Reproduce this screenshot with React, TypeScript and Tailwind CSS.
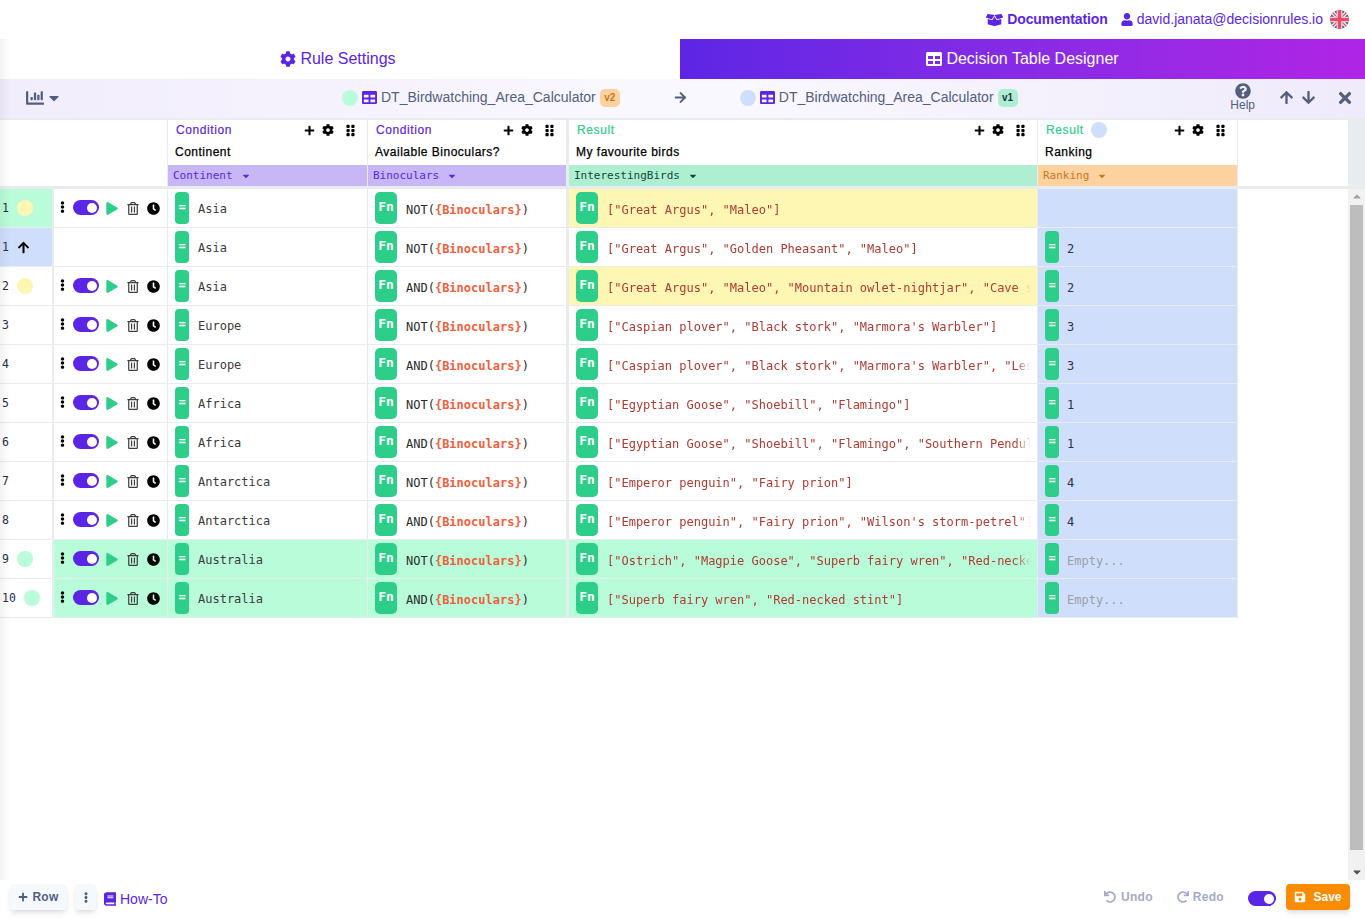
import React from 'react';
import {
  FaArrowDown,
  FaArrowRight,
  FaArrowUp,
  FaBook,
  FaBoxOpen,
  FaCaretDown,
  FaChartBar,
  FaClock,
  FaCog,
  FaEllipsisV,
  FaGripVertical,
  FaPlay,
  FaPlus,
  FaQuestionCircle,
  FaRedo,
  FaRegTrashAlt,
  FaSave,
  FaTable,
  FaTimes,
  FaUndo,
  FaUser,
} from 'react-icons/fa';

const MONO = { fontFamily: '"DejaVu Sans Mono", monospace' };

interface Row {
  n: string;
  continent: string;
  fn: 'NOT' | 'AND';
  birds: string;
  rank: string;
  kind?: 'old' | 'moved' | 'changed' | 'added';
}

const rows: Row[] = [
  { n: '1', continent: 'Asia', fn: 'NOT', birds: '["Great Argus", "Maleo"]', rank: '', kind: 'old' },
  { n: '1', continent: 'Asia', fn: 'NOT', birds: '["Great Argus", "Golden Pheasant", "Maleo"]', rank: '2', kind: 'moved' },
  { n: '2', continent: 'Asia', fn: 'AND', birds: '["Great Argus", "Maleo", "Mountain owlet-nightjar", "Cave swiftlet"]', rank: '2', kind: 'changed' },
  { n: '3', continent: 'Europe', fn: 'NOT', birds: '["Caspian plover", "Black stork", "Marmora\'s Warbler"]', rank: '3' },
  { n: '4', continent: 'Europe', fn: 'AND', birds: '["Caspian plover", "Black stork", "Marmora\'s Warbler", "Lesser kestrel"]', rank: '3' },
  { n: '5', continent: 'Africa', fn: 'NOT', birds: '["Egyptian Goose", "Shoebill", "Flamingo"]', rank: '1' },
  { n: '6', continent: 'Africa', fn: 'AND', birds: '["Egyptian Goose", "Shoebill", "Flamingo", "Southern Pendulin"]', rank: '1' },
  { n: '7', continent: 'Antarctica', fn: 'NOT', birds: '["Emperor penguin", "Fairy prion"]', rank: '4' },
  { n: '8', continent: 'Antarctica', fn: 'AND', birds: '["Emperor penguin", "Fairy prion", "Wilson\'s storm-petrel"]', rank: '4' },
  { n: '9', continent: 'Australia', fn: 'NOT', birds: '["Ostrich", "Magpie Goose", "Superb fairy wren", "Red-necked stint"]', rank: '', kind: 'added' },
  { n: '10', continent: 'Australia', fn: 'AND', birds: '["Superb fairy wren", "Red-necked stint"]', rank: '', kind: 'added' },
];

const Dot = ({ className }: { className: string }) => (
  <span className={`block w-4 h-4 rounded-full shrink-0 ${className}`} />
);

const Toggle = ({ className = 'w-[26px] h-[15px]' }: { className?: string }) => (
  <span className={`flex items-center justify-end pr-[2px] rounded-full bg-[#5b25e5] shrink-0 ${className}`}>
    <span className="block w-[10px] h-[10px] rounded-full bg-white" />
  </span>
);

const EqBadge = () => (
  <span className="flex items-center justify-center w-[14px] h-8 rounded-[4px] bg-[#2dce89] text-white text-[12px] font-bold shrink-0 pb-[2px]" style={MONO}>
    =
  </span>
);

const FnBadge = () => (
  <span
    className="flex items-start justify-center pt-[7px] w-[22px] h-8 rounded-[5px] bg-[#2dce89] text-white text-[13px] leading-[16px] font-bold shrink-0"
    style={MONO}
  >
    Fn
  </span>
);

const HeaderCell = ({
  label,
  title,
  column,
  tone,
  width,
  dot,
}: {
  label: string;
  title: string;
  column: string;
  tone: 'condition' | 'result' | 'ranking';
  width: string;
  dot?: boolean;
}) => {
  const strip =
    tone === 'condition'
      ? 'bg-[#c7b7f6] text-[#5b25e5]'
      : tone === 'result'
        ? 'bg-[#aeefd2] text-[#17463a]'
        : 'bg-[#fdd29f] text-[#c9761c]';
  return (
    <div className={`flex flex-col shrink-0 border-r border-[#e9ecef] ${width}`}>
      <div className="flex items-center h-[21px] pl-2 pr-[10px] pb-[1px]">
        <span
          className={`text-[12px] tracking-[0.6px] [-webkit-text-stroke:0.2px] ${tone === 'condition' ? 'text-[#5b25e5]' : 'text-[#2dce89]'}`}
        >
          {label}
        </span>
        {dot && <Dot className="bg-[#cfdffb] ml-[7px]" />}
        <span className="ml-auto flex items-center text-black">
          <FaPlus className="w-[11px] h-[11px]" />
          <FaCog className="w-[12px] h-[12px] ml-[7px]" />
          <FaGripVertical className="w-[13px] h-[13px] ml-[10px]" />
        </span>
      </div>
      <div className="h-[24px] pl-[7px] pb-[2px] flex items-center text-[12px] tracking-[0.5px] [-webkit-text-stroke:0.25px] text-black">{title}</div>
      <div className={`h-[21px] pl-[5px] pt-[1px] flex items-center text-[11px] ${strip}`} style={MONO}>
        {column}
        <FaCaretDown className="w-[10px] h-[10px] ml-[8px]" />
      </div>
    </div>
  );
};

const TableRow = ({ row }: { row: Row }) => {
  const { kind } = row;
  const added = kind === 'added';
  const indexBg = kind === 'old' ? 'bg-[#b9fcd9]' : kind === 'moved' ? 'bg-[#cfdffb]' : 'bg-white';
  const cellBg = added ? 'bg-[#b9fcd9]' : 'bg-white';
  const birdsBg = added ? 'bg-[#b9fcd9]' : kind === 'old' || kind === 'changed' ? 'bg-[#fef6b3]' : 'bg-white';
  return (
    <div className="flex h-[39px] w-[1238px] shrink-0 border-b border-[#e9ecef]">
      <div className={`flex items-center w-[52px] shrink-0 pl-[2px] text-[11.5px] text-[#24304a] ${indexBg}`} style={MONO}>
        <span className="w-[15px] pt-[1px]">{row.n}</span>
        {(kind === 'old' || kind === 'changed') && <Dot className="bg-[#fef6b3]" />}
        {added && <Dot className={`bg-[#b9fcd9] ${row.n === '10' ? 'ml-[7px]' : ''}`} />}
        {kind === 'moved' && <FaArrowUp className="w-[13px] h-[13px] text-black" />}
      </div>
      <div className={`flex items-center w-[116px] shrink-0 border-l-2 border-r border-[#e9ecef] pl-[3px] ${cellBg}`}>
        {kind !== 'moved' && (
          <>
            <FaEllipsisV className="w-[11px] h-[12px] text-black mb-[3px]" />
            <Toggle className="w-[26px] h-[15px] ml-[5px] mb-[1px]" />
            <FaPlay className="w-[12px] h-[13px] text-[#2dce89] ml-[7px]" />
            <FaRegTrashAlt className="w-[12px] h-[13px] text-[#3f3f3f] ml-[9px]" />
            <FaClock className="w-[13px] h-[13px] text-black ml-[8px]" />
          </>
        )}
      </div>
      <div className={`flex items-center gap-[9px] w-[200px] shrink-0 pl-[7px] border-r border-[#e9ecef] text-[12px] text-[#3a3a3a] ${cellBg}`} style={MONO}>
        <EqBadge />
        <span className="pt-[1px]">{row.continent}</span>
      </div>
      <div className={`flex items-center gap-[9px] w-[201px] shrink-0 pl-[7px] border-r-[3px] border-[#e9ecef] text-[12px] text-[#2b2b2b] ${cellBg}`} style={MONO}>
        <FnBadge />
        <span className="pt-[3px]">
          {row.fn}(<span className="text-[#f0603c] font-bold">{'{Binoculars}'}</span>)
        </span>
      </div>
      <div className={`flex items-center gap-[9px] w-[469px] shrink-0 pl-[7px] pr-[6px] border-r border-[#e9ecef] text-[12px] text-[#ae3b32] ${birdsBg}`} style={MONO}>
        <FnBadge />
        <span className="flex-1 min-w-0 pt-[3px] overflow-hidden whitespace-nowrap [mask-image:linear-gradient(to_right,black_calc(100%-16px),transparent)]">
          {row.birds}
        </span>
      </div>
      <div className="flex items-center gap-[8px] w-[200px] shrink-0 pl-[7px] border-r border-[#e9ecef] bg-[#cfdffb] text-[12px] text-[#2b3350]" style={MONO}>
        {kind !== 'old' && <EqBadge />}
        {kind !== 'old' && (
          <span className="pt-[3px]">{row.rank ? row.rank : <span className="text-[#9a9fa8]">Empty...</span>}</span>
        )}
      </div>
    </div>
  );
};

export default function App() {
  return (
    <div className="relative flex flex-col w-[1365px] h-[918px] overflow-hidden bg-white" style={{ fontFamily: '"Liberation Sans", Arial, sans-serif' }}>
      <div className="absolute left-0 top-[39px] bottom-[38px] w-[10px] bg-gradient-to-r from-black/5 to-transparent pointer-events-none z-10" />

      {/* top bar */}
      <div className="flex items-center justify-end h-[39px] pr-[16px] text-[14px] text-[#5b25e5] shrink-0">
        <FaBoxOpen className="w-[17px] h-[14px]" />
        <span className="ml-[4px] font-bold tracking-[-0.1px]">Documentation</span>
        <FaUser className="w-[12px] h-[13px] ml-[13px]" />
        <span className="ml-[4px]">david.janata@decisionrules.io</span>
        <svg viewBox="0 0 60 60" className="w-[19px] h-[19px] ml-[7px]">
          <clipPath id="flag">
            <circle cx="30" cy="30" r="30" />
          </clipPath>
          <g clipPath="url(#flag)">
            <rect width="60" height="60" fill="#44578f" />
            <path d="M0 0L60 60M60 0L0 60" stroke="#eeeef3" strokeWidth="12" />
            <path d="M0 0L60 60M60 0L0 60" stroke="#ef4a64" strokeWidth="4" />
            <path d="M30 0V60M0 30H60" stroke="#eeeef3" strokeWidth="18" />
            <path d="M30 0V60M0 30H60" stroke="#ef4a64" strokeWidth="11" />
          </g>
        </svg>
      </div>

      {/* tabs */}
      <div className="flex h-[40px] shrink-0 text-[16px]">
        <div className="flex items-center justify-center gap-[4px] w-[680px] pr-[4px] text-[#5b25e5]">
          <FaCog className="w-[16px] h-[16px]" />
          Rule Settings
        </div>
        <div className="flex items-center justify-center gap-[4px] flex-1 text-white bg-gradient-to-r from-[#5e25e5] to-[#b024e5]">
          <FaTable className="w-[16px] h-[16px]" />
          Decision Table Designer
        </div>
      </div>

      {/* compare toolbar */}
      <div className="flex items-center h-[39px] pb-[2px] shrink-0 bg-gradient-to-r from-[#f1edfc] via-[#faf8ff] to-[#efebfb] text-[#525f7f]">
        <div className="flex items-center w-[342px] pl-[26px]">
          <FaChartBar className="w-[18px] h-[18px]" />
          <FaCaretDown className="w-[16px] h-[16px] ml-[2px]" />
        </div>
        <Dot className="bg-[#b9fcd9]" />
        <FaTable className="w-[15px] h-[15px] ml-[4px] text-[#5b25e5]" />
        <span className="ml-[4px] text-[14px]">DT_Birdwatching_Area_Calculator</span>
        <span className="flex items-center justify-center ml-[4px] w-[20px] h-[18px] rounded-[5px] bg-[#fdd29f] text-[#c9761c] text-[10px] font-bold">v2</span>
        <FaArrowRight className="w-[13px] h-[13px] ml-[54px]" />
        <span className="ml-[53px]"><Dot className="bg-[#cfdffb]" /></span>
        <FaTable className="w-[15px] h-[15px] ml-[4px] text-[#5b25e5]" />
        <span className="ml-[4px] text-[14px]">DT_Birdwatching_Area_Calculator</span>
        <span className="flex items-center justify-center ml-[4px] w-[20px] h-[18px] rounded-[5px] bg-[#aeefd2] text-[#24304a] text-[10px] font-bold">v1</span>
        <div className="flex flex-col items-center ml-auto">
          <FaQuestionCircle className="w-[16px] h-[16px]" />
          <span className="text-[12px] leading-[13px]">Help</span>
        </div>
        <FaArrowUp className="w-[15px] h-[15px] ml-[24px]" />
        <FaArrowDown className="w-[15px] h-[15px] ml-[7px]" />
        <FaTimes className="w-[18px] h-[18px] ml-[20px] mr-[11px]" />
      </div>

      {/* table */}
      <div className="flex flex-1 min-h-0 border-t-2 border-[#e9ecef]">
        <div className="flex-1 min-w-0 flex flex-col">
          <div className="flex h-[69px] shrink-0 border-b-[3px] border-[#e9ecef]">
            <div className="w-[168px] shrink-0 border-r border-[#e9ecef]" />
            <HeaderCell label="Condition" title="Continent" column="Continent" tone="condition" width="w-[200px]" />
            <HeaderCell label="Condition" title="Available Binoculars?" column="Binoculars" tone="condition" width="w-[201px] border-r-[3px]" />
            <HeaderCell label="Result" title="My favourite birds" column="InterestingBirds" tone="result" width="w-[469px]" />
            <HeaderCell label="Result" title="Ranking" column="Ranking" tone="ranking" width="w-[200px]" dot />
          </div>
          {rows.map((row, i) => (
            <TableRow key={i} row={row} />
          ))}
        </div>

        {/* scrollbar */}
        <div className="flex flex-col w-[17px] shrink-0">
          <div className="h-[67px] bg-[#e9ecef]" />
          <div className="flex-1 flex flex-col items-center bg-[#f1f1f1] border-t-2 border-[#e9ecef]">
            <FaCaretDown className="w-[12px] h-[12px] text-[#a3a3a3] rotate-180 mt-[2px]" />
            <div className="w-[13px] h-[645px] bg-[#bdbdbd] mt-[2px]" />
            <FaCaretDown className="w-[12px] h-[12px] text-[#505050] mt-auto mb-[2px]" />
          </div>
        </div>
      </div>

      {/* footer */}
      <div className="flex items-center h-[38px] shrink-0 pl-[10px] pr-[15px] pb-[4px]">
        <button className="flex items-center gap-[4px] h-[26px] w-[57px] justify-center rounded-[4px] bg-[#f6f9fc] shadow-md text-[12px] font-bold text-[#525f7f] tracking-[0.3px]">
          <FaPlus className="w-[10px] h-[10px]" />
          Row
        </button>
        <button className="flex items-center justify-center ml-[8px] h-[26px] w-[21px] rounded-[4px] bg-[#f6f9fc] shadow-md text-[#525f7f]">
          <FaEllipsisV className="w-[10px] h-[11px]" />
        </button>
        <FaBook className="w-[12px] h-[14px] ml-[8px] mt-[4px] text-[#5b25e5]" />
        <span className="ml-[4px] mt-[4px] text-[14px] text-[#5b25e5]">How-To</span>

        <span className="flex items-center gap-[5px] ml-auto text-[12px] font-bold tracking-[0.3px] text-[#a3abc4]">
          <FaUndo className="w-[12px] h-[12px]" />
          Undo
        </span>
        <span className="flex items-center gap-[4px] ml-[24px] text-[12px] font-bold tracking-[0.3px] text-[#a3abc4]">
          <FaRedo className="w-[12px] h-[12px]" />
          Redo
        </span>
        <Toggle className="w-[28px] h-[15px] ml-[24px] mt-[3px]" />
        <button className="flex items-center justify-center gap-[7px] ml-[10px] h-[26px] w-[64px] rounded-[4px] bg-[#fb8c00] shadow-md text-white text-[12px] font-bold">
          <FaSave className="w-[12px] h-[12px]" />
          Save
        </button>
      </div>
    </div>
  );
}
